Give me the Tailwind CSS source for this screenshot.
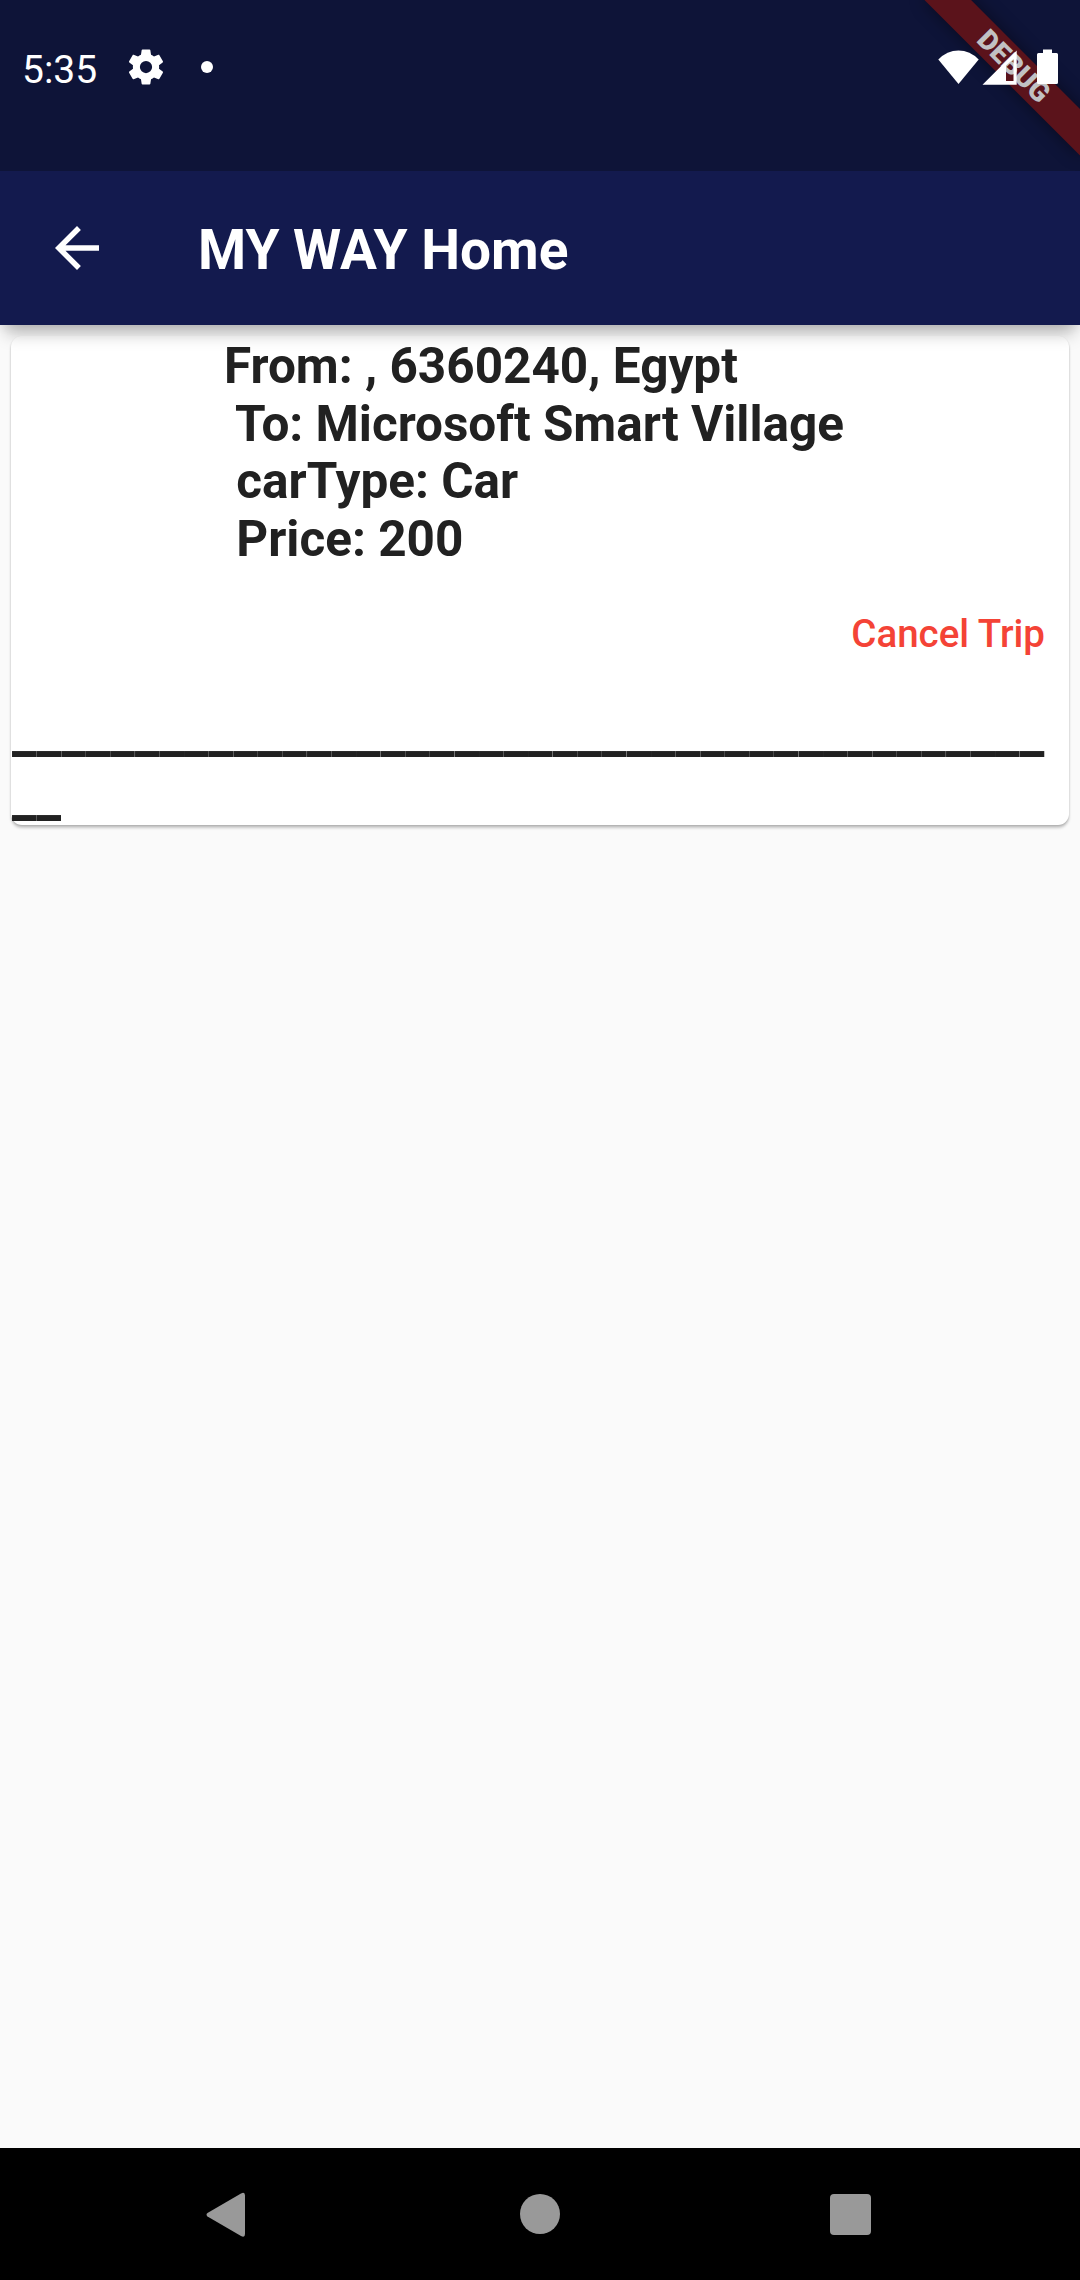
<!DOCTYPE html>
<html lang="en">
<head>
<meta charset="utf-8">
<title>MY WAY Home</title>
<script src="https://cdn.jsdelivr.net/npm/@tailwindcss/browser@4"></script>
</head>
<body class="font-['Roboto',sans-serif]">
<div class="relative flex h-[2280px] w-[1080px] flex-col overflow-hidden bg-[#fafafa]">
  <!-- Status bar -->
  <div class="relative z-20 flex h-[171px] shrink-0 items-start overflow-hidden bg-[#0e1438] text-white">
    <div class="flex h-[134px] w-full items-center pr-[21px] pl-[22px]">
      <span class="w-[103px] pt-[7px] text-[39px] leading-[45px]">5:35</span>
      <svg class="size-[42px]" viewBox="0 0 24 24" fill="currentColor"><path d="M19.43 12.98c.04-.32.07-.64.07-.98s-.03-.66-.07-.98l2.11-1.65c.19-.15.24-.42.12-.64l-2-3.460c-.12-.22-.39-.3-.61-.22l-2.49 1c-.52-.4-1.080-.73-1.690-.98l-.38-2.650A.488.488 0 0 0 14 2h-4c-.25 0-.46.18-.49.42l-.38 2.650c-.61.25-1.170.59-1.690.98l-2.490-1c-.23-.09-.49 0-.61.22l-2 3.460c-.13.22-.07.49.12.64l2.110 1.650c-.04.32-.07.65-.07.98s.03.66.07.98l-2.110 1.650c-.19.15-.24.42-.12.64l2 3.460c.12.22.39.3.61.22l2.490-1c.52.4 1.080.73 1.690.98l.38 2.650c.03.24.24.42.49.42h4c.25 0 .46-.18.49-.42l.38-2.650c.61-.25 1.170-.59 1.690-.98l2.490 1c.23.09.49 0 .61-.22l2-3.460c.12-.22.07-.49-.12-.64l-2.110-1.650zM12 15.500a3.500 3.500 0 1 1 0-7 3.500 3.500 0 0 1 0 7z"/></svg>
      <span class="ml-[34px] size-3 rounded-full bg-white"></span>
      <svg class="relative z-10 ml-auto h-[36px] w-[121px]" viewBox="938 49 121 36" fill="#fff">
        <path d="M938.300 59.500Q947 50.500 958.500 50.500T978.700 59.500L958.500 84Z"/>
        <path fill-rule="evenodd" d="M982.500 84.700L1016.700 50.500V84.700ZM1006 65.500V81H1013.500V59Z"/>
        <path d="M1043 49.500h9v3.500h4.500q1.500 0 1.500 1.500v28q0 1.500-1.500 1.500h-18q-1.500 0-1.500-1.500v-28q0-1.500 1.500-1.500h4.500z"/>
      </svg>
    </div>
    <!-- Debug ribbon -->
    <div class="absolute top-[77px] left-[970px] flex h-[33px] w-[220px] origin-[110px_-77px] rotate-45 items-center justify-center bg-[#5b131b] text-[28px] leading-none font-black text-[#c1c1c3] shadow-[0_0_17px_rgba(0,0,0,0.45)]">DEBUG</div>
  </div>
  <!-- App bar -->
  <header class="relative z-10 flex h-[154px] shrink-0 items-center bg-[#131a4e] text-white shadow-[0_14px_16px_-6px_rgba(0,0,0,0.27),0_2px_10px_rgba(0,0,0,0.06)]">
    <svg class="ml-[44px] size-[66px]" viewBox="0 0 24 24" fill="currentColor"><path d="M20 11H7.830l5.590-5.590L12 4l-8 8 8 8 1.410-1.410L7.830 13H20v-2z"/></svg>
    <h1 class="ml-[88px] pt-[4px] text-[55px] leading-[64px] font-bold whitespace-nowrap">MY WAY Home</h1>
  </header>
  <!-- Trips -->
  <main class="flex-1 px-[11px] pt-[11px]">
    <section class="flex h-[489px] flex-col rounded-[11px] bg-white text-[#212121] shadow-[0_3px_3px_rgba(0,0,0,0.2),0_1px_2px_rgba(0,0,0,0.14)]">
      <div class="pt-[2px] pl-[213px] text-[49.5px] leading-[57.600px] font-bold whitespace-pre"><p>From: , 6360240, Egypt</p><p class="tracking-[-0.03px]"> To: Microsoft Smart Village</p><p> carType: Car</p><p> Price: 200</p></div>
      <button class="mt-[43px] mr-[24px] self-end text-[38.500px] leading-[45px] font-medium text-[#f44336]">Cancel Trip</button>
      <p class="relative top-[3px] mt-auto w-[1045px] pl-px text-[55.250px] leading-[64px] font-bold break-all">____________________________________________</p>
    </section>
  </main>
  <!-- Navigation bar -->
  <nav class="h-[132px] shrink-0 bg-black">
    <svg class="h-[132px] w-[1080px]" viewBox="0 0 1080 132" fill="#999">
      <path d="M207.500 65q-2 1.700 0 3.400L241 88q4 2 4-2V47.500q0-4-4-2Z"/>
      <circle cx="540" cy="66" r="20"/>
      <rect x="830" y="46" width="41" height="41" rx="4"/>
    </svg>
  </nav>
</div>
</body>
</html>
